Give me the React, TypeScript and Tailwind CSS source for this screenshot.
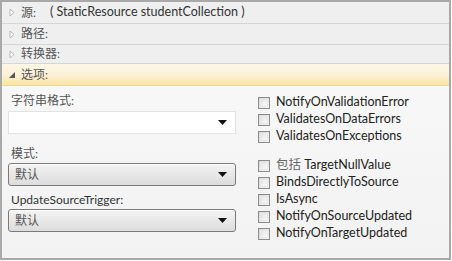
import React from "react";

const font = { fontFamily: 'Lato, "Noto Sans CJK SC", sans-serif' };

function Header({ label, value, h, open }: { label: string; value?: string; h: string; open?: boolean }) {
  return (
    <div
      className={`flex items-center ${h} border-b border-[#d6d6d6] ${
        open ? "bg-gradient-to-b from-[#fdf7e6] via-[#fcf1d8] to-[#fde3a4]" : "bg-[#efefef]"
      }`}
    >
      <span className="w-[19px] flex justify-center">
        {open ? (
          <svg width="8" height="8" viewBox="0 0 8 8">
            <path d="M7 1 L7 7 L1 7 Z" fill="#555" />
          </svg>
        ) : (
          <svg width="8" height="9" viewBox="0 0 8 9">
            <path d="M2 1 L6 4.5 L2 8 Z" fill="#fff" stroke="#b8b8b8" strokeWidth="1" />
          </svg>
        )}
      </span>
      <span className="text-[12px] text-[#555] whitespace-nowrap min-w-[29px]">{label}</span>
      {value && <span className="text-[12.5px] text-[#333] whitespace-nowrap">{value}</span>}
    </div>
  );
}

function Select({ value }: { value?: string }) {
  return (
    <div className="h-[23px] w-[228px] rounded-[3px] border border-[#7a7a7a] bg-gradient-to-b from-[#f4f4f4] to-[#dcdcdc] flex items-center justify-between px-[6px] shadow-[inset_0_1px_0_#fff]">
      <span className="text-[12px] text-[#555]">{value}</span>
      <svg width="9" height="5" viewBox="0 0 9 5" className="mr-[2px]">
        <path d="M0 0 L9 0 L4.5 5 Z" fill="#111" />
      </svg>
    </div>
  );
}

function Check({ label }: { label: React.ReactNode }) {
  return (
    <div className="flex items-center h-[17px]">
      <span className="w-[12px] h-[12px] border border-[#8c8c8c] bg-gradient-to-br from-[#d8d8d8] to-[#f6f6f6] p-[1px] mr-[6px]">
        <span className="block w-full h-full border border-[#e8e8e8] bg-gradient-to-br from-[#e4e4e4] to-[#fafafa]" />
      </span>
      <span className="text-[12.5px] text-[#222] leading-none whitespace-nowrap">{label}</span>
    </div>
  );
}

export default function App() {
  return (
    <div className="w-[452px] h-[261px] bg-white" style={font}>
      <div className="w-[451px] h-[260px] border-2 border-[#a9a9a9] flex flex-col bg-gradient-to-b from-[#fafafa] to-[#f2f2f2]">
        <Header label="源:" value="( StaticResource studentCollection )" h="h-[22px]" />
        <Header label="路径:" h="h-[21px]" />
        <Header label="转换器:" h="h-[19px]" />
        <Header label="选项:" h="h-[22px]" open />
        <div className="flex pl-[6px] pt-[6px]">
          <div className="w-[250px] flex flex-col">
            <span className="text-[12px] text-[#555] pl-[3px] h-[17px] leading-[17px]">字符串格式:</span>
            <div className="mt-[2px] h-[23px] w-[228px] border border-[#e2e2e2] bg-white flex items-center justify-end pr-[8px]">
              <svg width="9" height="5" viewBox="0 0 9 5">
                <path d="M0 0 L9 0 L4.5 5 Z" fill="#111" />
              </svg>
            </div>
            <span className="text-[12px] text-[#555] pl-[3px] mt-[11px] h-[17px] leading-[17px]">模式:</span>
            <div className="mt-[1px]">
              <Select value="默认" />
            </div>
            <span className="text-[12px] text-[#333] pl-[3px] mt-[5px] h-[17px] leading-[17px]">UpdateSourceTrigger:</span>
            <div className="mt-[1px]">
              <Select value="默认" />
            </div>
          </div>
          <div className="flex flex-col pt-[2px]">
            <Check label="NotifyOnValidationError" />
            <Check label="ValidatesOnDataErrors" />
            <Check label="ValidatesOnExceptions" />
            <div className="h-[12px]" />
            <Check label={<><span className="text-[#666]">包括</span> TargetNullValue</>} />
            <Check label="BindsDirectlyToSource" />
            <Check label="IsAsync" />
            <Check label="NotifyOnSourceUpdated" />
            <Check label="NotifyOnTargetUpdated" />
          </div>
        </div>
      </div>
    </div>
  );
}
